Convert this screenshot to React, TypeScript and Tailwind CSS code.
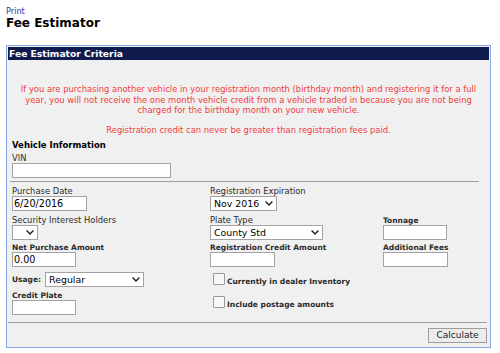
import type { ReactNode } from "react";

function Label({ children, bold }: { children: ReactNode; bold?: boolean }) {
  return (
    <div
      className={`h-[9px] leading-[9px] whitespace-nowrap text-[#2a2a2a] ${
        bold ? "text-[7.5px] font-bold" : "text-[8.4px]"
      }`}
    >
      {children}
    </div>
  );
}

function TextBox({ w, value }: { w: string; value?: string }) {
  return (
    <div
      className={`${w} h-[15px] bg-white border border-[#a3a3a3] pl-px text-[9.6px] leading-[13px] text-black whitespace-nowrap`}
    >
      {value}
    </div>
  );
}

function Chevron() {
  return (
    <svg width="8" height="5" viewBox="0 0 8 5" className="shrink-0">
      <polyline
        points="0.6,0.6 4,4 7.4,0.6"
        fill="none"
        stroke="#1e1e1e"
        strokeWidth="1.4"
      />
    </svg>
  );
}

function SelectBox({ w, value }: { w: string; value?: string }) {
  return (
    <div
      className={`${w} h-[15px] bg-white border border-[#a3a3a3] pl-[3px] pr-[3px] flex items-center justify-between text-[9.4px] text-black whitespace-nowrap`}
    >
      <span className="leading-[13px]">{value}</span>
      <Chevron />
    </div>
  );
}

function Checkbox({ label }: { label: string }) {
  return (
    <div className="flex items-end gap-[2px] pl-[3px]">
      <div className="w-[12px] h-[12px] bg-[#f7f7f7] border border-[#9a9a9a] rounded-[1px]" />
      <div className="text-[7.5px] font-bold leading-[9px] text-[#2a2a2a] whitespace-nowrap translate-y-[1px]">
        {label}
      </div>
    </div>
  );
}

export default function App() {
  return (
    <div className="min-h-screen w-[500px] bg-white pl-[6px] pt-[6px] font-['DejaVu_Sans',Verdana,sans-serif]">
      <a className="block text-[8.2px] leading-[10px] text-[#3535a6]">Print</a>
      <h1 className="text-[12px] leading-[14px] font-bold text-black">Fee Estimator</h1>

      <div className="mt-[15px] w-[485px] border border-[#86a7e2] bg-[#f0f0f0] p-px">
        <div className="h-[13px] bg-[#0f1b4c] pl-px text-[9.2px] leading-[13px] font-bold text-white">
          Fee Estimator Criteria
        </div>

        <div className="px-[4px]">
          <div className="mt-[24px] text-center text-[8.4px] leading-[10.5px] text-[#ef3d3d] whitespace-nowrap">
            <p>
              If you are purchasing another vehicle in your registration month (birthday month) and registering it for a full
              <br />
              year, you will not receive the one month vehicle credit from a vehicle traded in because you are not being
              <br />
              charged for the birthday month on your new vehicle.
            </p>
            <p className="mt-[9px]">
              Registration credit can never be greater than registration fees paid.
            </p>
          </div>

          <div className="mt-[5px] text-[8.5px] leading-[10px] font-bold text-black">
            Vehicle Information
          </div>
          <div className="mt-[4px]">
            <Label>VIN</Label>
            <TextBox w="w-[159px]" />
          </div>

          <div className="mt-[3px] mr-[6px] -ml-[2px] border-t border-[#a0a0a0]" />

          <div className="mt-[5px] grid grid-cols-[198px_173px_1fr]">
            <div>
              <Label>Purchase Date</Label>
              <TextBox w="w-[75px]" value="6/20/2016" />
            </div>
            <div>
              <Label>Registration Expiration</Label>
              <SelectBox w="w-[67px]" value="Nov 2016" />
            </div>
            <div />
          </div>

          <div className="mt-[5px] grid grid-cols-[198px_173px_1fr]">
            <div>
              <Label>Security Interest Holders</Label>
              <SelectBox w="w-[26px]" />
            </div>
            <div>
              <Label>Plate Type</Label>
              <SelectBox w="w-[113px]" value="County Std" />
            </div>
            <div>
              <Label bold>Tonnage</Label>
              <TextBox w="w-[64px]" />
            </div>
          </div>

          <div className="mt-[3px] grid grid-cols-[198px_173px_1fr]">
            <div>
              <Label bold>Net Purchase Amount</Label>
              <TextBox w="w-[64px]" value="0.00" />
            </div>
            <div>
              <Label bold>Registration Credit Amount</Label>
              <TextBox w="w-[65px]" />
            </div>
            <div>
              <Label bold>Additional Fees</Label>
              <TextBox w="w-[65px]" />
            </div>
          </div>

          <div className="mt-[5px] grid grid-cols-[198px_173px_1fr]">
            <div>
              <div className="flex items-center gap-[4px]">
                <span className="text-[7.5px] font-bold leading-[9px] text-[#2a2a2a]">Usage:</span>
                <SelectBox w="w-[99px]" value="Regular" />
              </div>
              <div className="mt-[4px]">
                <Label bold>Credit Plate</Label>
                <TextBox w="w-[64px]" />
              </div>
            </div>
            <div className="pt-px flex flex-col gap-[11px]">
              <Checkbox label="Currently in dealer Inventory" />
              <Checkbox label="Include postage amounts" />
            </div>
            <div />
          </div>
        </div>

        <div className="mt-[7px] mx-[0px] mr-[2px] border-t border-[#a0a0a0]" />

        <div className="flex justify-end pr-[2px] pt-[5px] pb-[3px]">
          <button className="w-[59px] h-[15px] bg-[#ececec] border border-[#9c9c9c] text-[9px] leading-[13px] text-[#222]">
            Calculate
          </button>
        </div>
      </div>
    </div>
  );
}
